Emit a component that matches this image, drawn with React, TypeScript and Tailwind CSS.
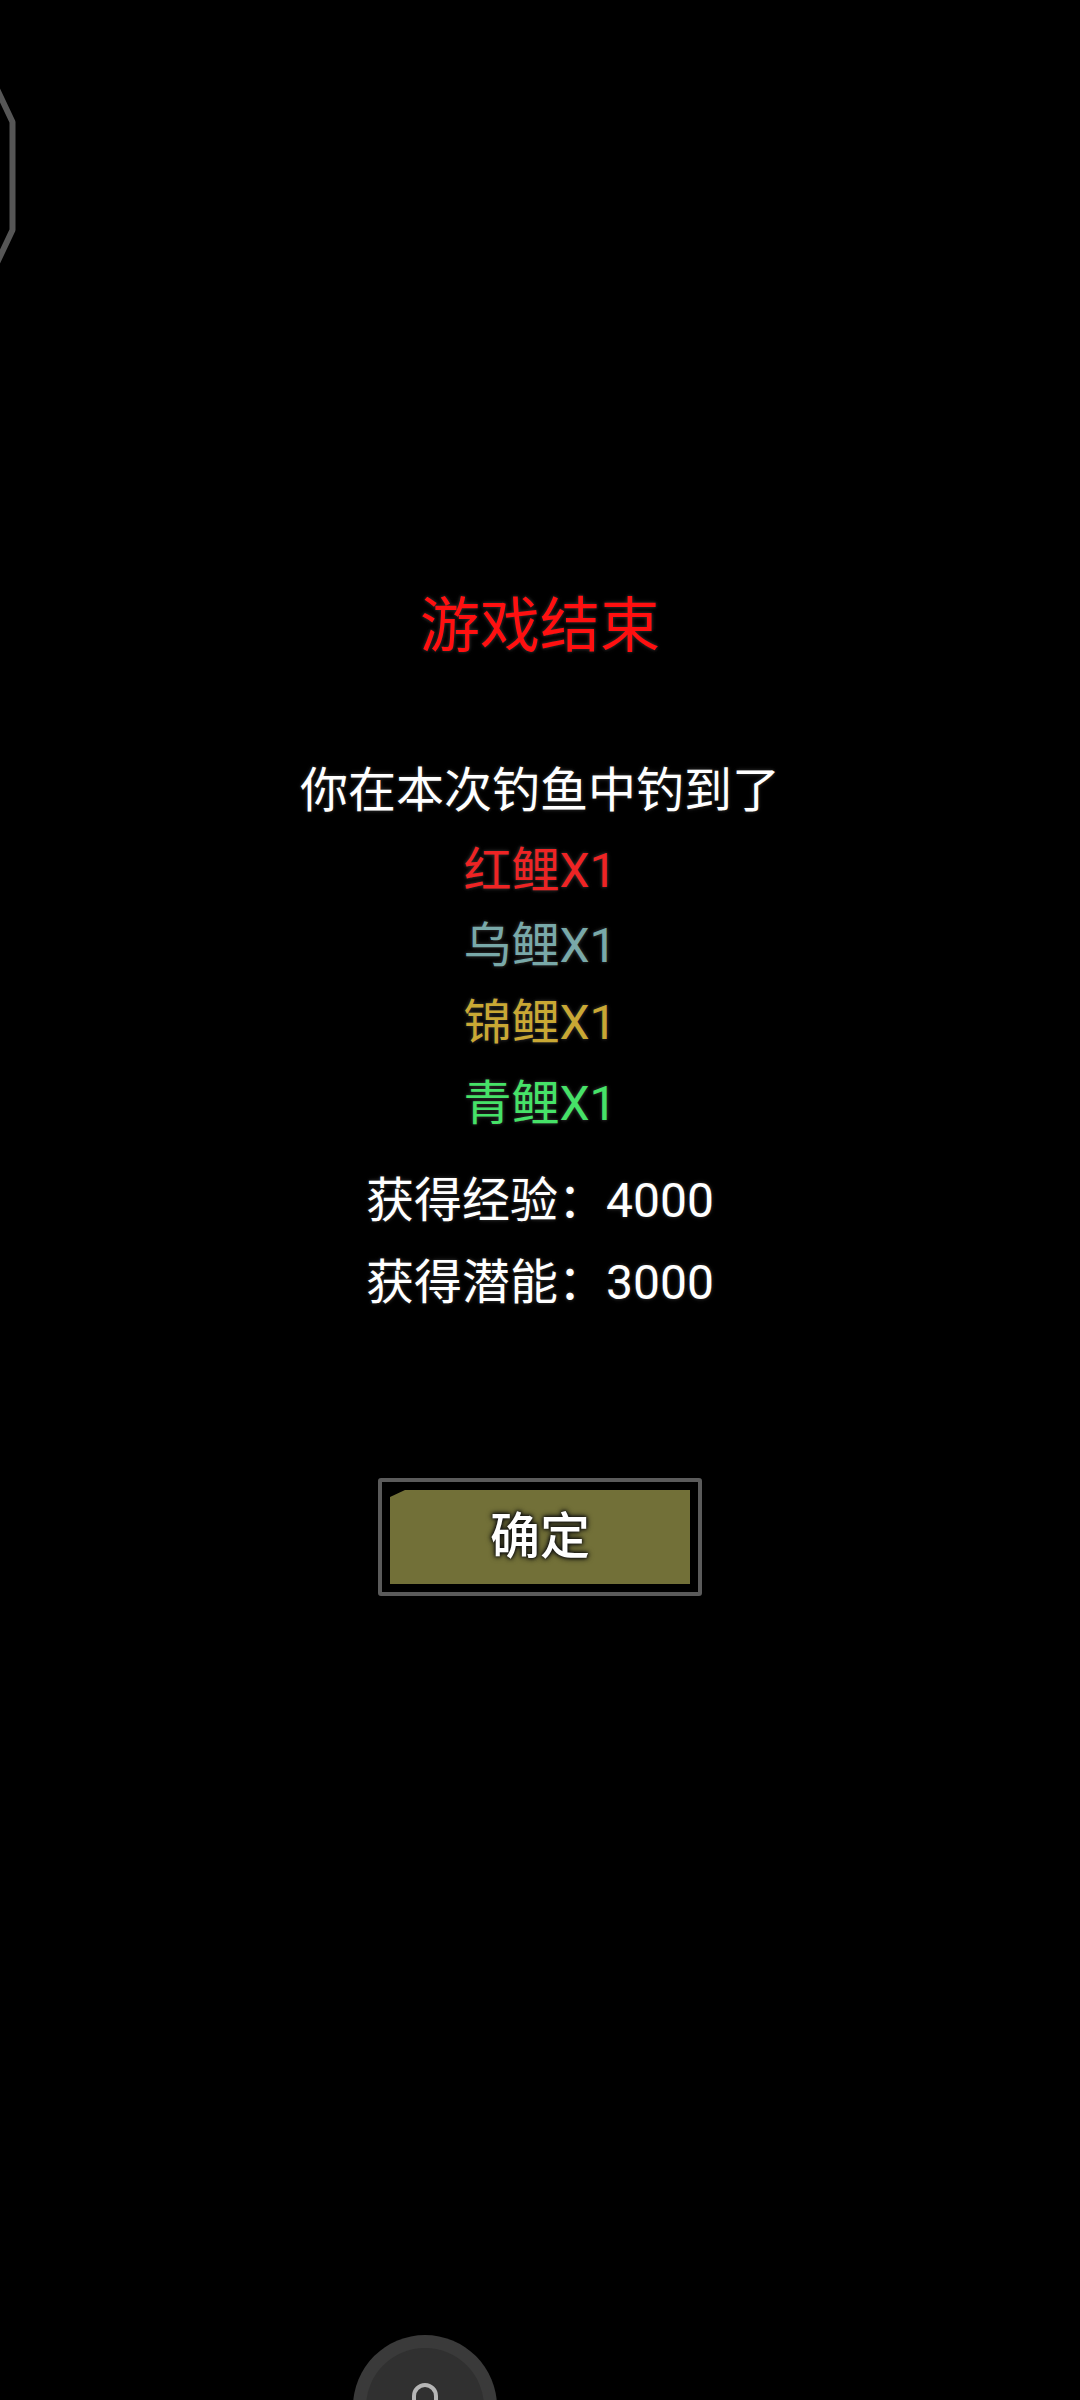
export default function App() {
  const glow = "[text-shadow:0_0_3px_#2e2e2e,0_0_5px_#262626]";
  const fish = [
    { name: "红鲤", color: "text-[#ee2424]", mt: "mt-[20px]" },
    { name: "乌鲤", color: "text-[#79a9a9]", mt: "mt-[15px]" },
    { name: "锦鲤", color: "text-[#c9a834]", mt: "mt-[17px]" },
    { name: "青鲤", color: "text-[#46e268]", mt: "mt-[21px]" },
  ];

  return (
    <div className="relative min-h-[2400px] w-[1080px] overflow-hidden bg-black font-['Roboto','Noto_Sans_CJK_SC',sans-serif]">
      {/* side panel edge peeking in from the left */}
      <svg className="absolute left-0 top-0" width="24" height="300" viewBox="0 0 24 300">
        <polyline
          points="-12,70 12.5,122 12.5,230 -12,282"
          fill="none"
          stroke="#565656"
          strokeWidth="6"
          strokeLinejoin="bevel"
        />
      </svg>

      <div className="flex flex-col items-center pt-[591px]">
        <h1 className={`text-[60px] leading-[72px] text-[#ff1010] ${glow}`}>游戏结束</h1>

        <p className={`mt-[98px] text-[48px] leading-[60px] text-white ${glow}`}>
          你在本次钓鱼中钓到了
        </p>

        {fish.map((f) => (
          <p key={f.name} className={`${f.mt} text-[48px] leading-[60px] ${f.color} ${glow}`}>
            {f.name}X1
          </p>
        ))}

        <p className={`mt-[37px] text-[48px] leading-[60px] text-white ${glow}`}>获得经验：4000</p>
        <p className={`mt-[22px] text-[48px] leading-[60px] text-white ${glow}`}>获得潜能：3000</p>

        <button className="mt-[165px] rounded-[3px] border-4 border-[#5b5b5b] bg-black p-2">
          <div className="flex h-[94px] w-[300px] items-center justify-center bg-[#727038] [clip-path:polygon(15px_0,100%_0,100%_100%,0_100%,0_7px)]">
            <span className="text-[50px] font-medium leading-none text-white [text-shadow:0_0_3px_#111,0_0_4px_#111,0_0_6px_#111]">
              确定
            </span>
          </div>
        </button>
      </div>

      {/* floating round button at the bottom */}
      <div className="absolute left-[353px] top-[2335px] flex h-[144px] w-[144px] items-start justify-center rounded-full bg-[#3a3a3a] pt-[13px]">
        <div className="flex h-[118px] w-[118px] justify-center rounded-full bg-[#303030] pt-[34px]">
          <svg width="30" height="40" viewBox="0 0 30 40">
            <path d="M4 30 V14 A11 11 0 0 1 26 14 V30" fill="none" stroke="#b5b5b5" strokeWidth="4" />
          </svg>
        </div>
      </div>
    </div>
  );
}
